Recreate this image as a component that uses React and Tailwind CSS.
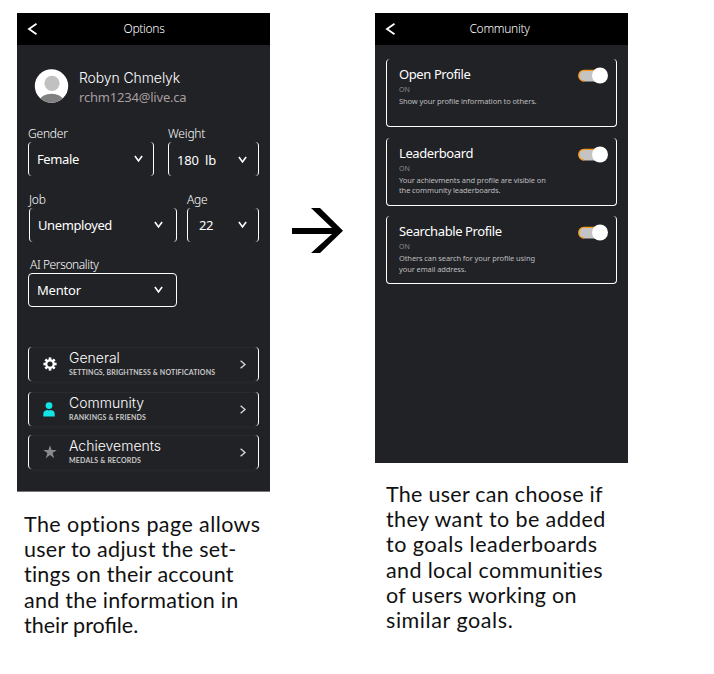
import React from "react";

const lato = "font-['Lato',sans-serif]";
const noto = "font-['Noto_Sans',sans-serif]";

function Chevron({ className, d, w, h, stroke = "#fff", sw = 1.6 }) {
  return (
    <svg className={className} width={w} height={h} viewBox={`0 0 ${w} ${h}`} fill="none">
      <path d={d} stroke={stroke} strokeWidth={sw} />
    </svg>
  );
}

function Header({ title, className }) {
  return (
    <header className="grid h-8 grid-cols-[32px_1fr_31px] items-center bg-black text-white">
      <Chevron className="ml-[10px]" w={11} h={12} d="M9.5 .8 2 6l7.5 5.2" sw={1.8} />
      <h1 className={`text-center text-[12px] leading-4 font-light ${noto} ${className}`}>{title}</h1>
    </header>
  );
}

function Field({ label, value, className, boxClass, labelClass = "tracking-[-0.2px]", valueClass = "tracking-[-0.4px]", arrowClass = "mr-[10px]" }) {
  return (
    <div className={`flex flex-col text-white ${className}`}>
      <span className={`h-4 text-[12px] leading-4 font-light ${noto} ${labelClass}`}>{label}</span>
      <div className={`flex h-[34px] items-center justify-between rounded-[4px] border-white ${boxClass}`}>
        <span className={`text-[13px] leading-4 whitespace-pre ${noto} ${valueClass}`}>{value}</span>
        <Chevron className={arrowClass} w={9} h={8} d="M.9 1 4.5 6 8.1 1" />
      </div>
    </div>
  );
}

function MenuRow({ icon, title, sub, subClass, className = "" }) {
  return (
    <div className={`flex h-[34px] items-center rounded-[4px] border-x border-white pr-[12px] shadow-[inset_0_1px_0_#292a2d,0_3px_3px_#26272a] ${className}`}>
      <div className="flex w-[40px] justify-center pl-[2px]">{icon}</div>
      <div className="flex flex-1 flex-col pt-px text-white">
        <span className="text-[14px] leading-[15px] font-['Inter',sans-serif] font-light">{title}</span>
        <span className={`text-[7px] leading-[14px] font-bold text-[#c8c8c8] ${lato} ${subClass}`}>{sub}</span>
      </div>
      <Chevron w={6} h={9} d="M.6 .8 5 4.5 .6 8.2" stroke="#d8d8d8" sw={1.4} />
    </div>
  );
}

function Card({ title, lines }) {
  return (
    <section className="flex h-[68px] justify-between rounded-[4px] border-x border-b border-white pt-[7px] pr-[8px] pl-[12px]">
      <div className="flex flex-col whitespace-nowrap">
        <h2 className={`text-[13px] leading-[17px] tracking-[-0.4px] text-white ${noto}`}>{title}</h2>
        <span className={`text-[7px] leading-[13px] text-[#8b8b8d] ${noto}`}>ON</span>
        {lines.map((l) => (
          <span key={l} className={`text-[7.5px] leading-[10.5px] tracking-[-0.1px] text-[#bdbdbf] ${noto}`}>{l}</span>
        ))}
      </div>
      <svg width="30" height="17" viewBox="0 0 30 17" className="mt-px">
        <rect x=".5" y="3" width="24" height="11.5" rx="5.7" fill="#c4c4c4" />
        <path d="M18 3.4H6.2C-.9 3.4-.9 14 6.2 14" fill="none" stroke="#f79a1b" strokeWidth="1.3" />
        <circle cx="22" cy="8.5" r="8" fill="#fff" />
      </svg>
    </section>
  );
}

function Caption({ lines, className }) {
  return (
    <p className={`text-[21.5px] leading-[25.2px] whitespace-nowrap text-[#111] ${lato} ${className}`}>
      {lines.map(([text, spacing]) => (
        <span key={text} className={`block ${spacing}`}>{text}</span>
      ))}
    </p>
  );
}

const gear = (
  <svg width="14" height="14" viewBox="-7 -7 14 14">
    {[0, 45, 90, 135].map((a) => (
      <rect key={a} x="-1.3" y="-6.6" width="2.6" height="13.2" fill="#fff" transform={`rotate(${a})`} />
    ))}
    <circle r="4.8" fill="#fff" />
    <circle r="2.6" fill="#212226" />
  </svg>
);
const person = (
  <svg className="-translate-x-px" width="12" height="15" viewBox="0 0 12 15" fill="#12e5e8">
    <circle cx="6" cy="3.6" r="3.4" />
    <path d="M.3 14.5V12Q.3 8.4 4.2 8Q6 8.8 7.8 8Q11.7 8.4 11.7 12V14.5Z" />
  </svg>
);
const star = (
  <svg width="14" height="14" viewBox="0 0 14 14" fill="#8a8a8c">
    <path d="M7 .2 8.6 5H13.8L9.6 8.1 11.2 13.3 7 10.1 2.8 13.3 4.4 8.1.2 5H5.4Z" />
  </svg>
);

export default function App() {
  return (
    <main className="flex h-[674px] w-[714px] items-start overflow-hidden bg-white pt-[13px] pl-[17px]">
      <div className="w-[253px]">
        <div className="flex h-[479px] flex-col border-b border-[#77777a] bg-[#212226]">
          <Header title="Options" className="tracking-[-0.3px]" />
          <div className="mt-[23px] ml-[17px] flex h-[36px] gap-[10px]">
            <svg width="35" height="36" viewBox="0 0 35 36">
              <defs>
                <clipPath id="face"><circle cx="17.5" cy="18" r="16.7" /></clipPath>
              </defs>
              <circle cx="17.5" cy="18" r="16.7" fill="#fff" />
              <circle cx="18" cy="15.3" r="7.6" fill="#c1c1c1" />
              <ellipse cx="17.5" cy="31.5" rx="11" ry="5.7" fill="#808080" clipPath="url(#face)" />
            </svg>
            <div className="flex flex-col whitespace-nowrap">
              <span className="text-[14px] leading-[19px] font-['Inter',sans-serif] font-light tracking-[-0.1px] text-white">Robyn Chmelyk</span>
              <span className={`text-[13px] leading-[20px] tracking-[-0.2px] text-[#a89da0] ${noto}`}>rchm1234@live.ca</span>
            </div>
          </div>
          <div className="mt-[22px] mr-[11px] ml-[11px] flex justify-between">
            <Field label="Gender" value="Female" className="w-[126px]" boxClass="border-x pl-[8px]" />
            <Field label="Weight" value="180  lb" className="w-[91px]" boxClass="border-x pl-[8px]" valueClass="tracking-[-0.2px] pt-[2px]" arrowClass="mr-[11px] mt-[2px]" />
          </div>
          <div className="mt-[16px] mr-[11px] ml-[12px] flex justify-between">
            <Field label="Job" value="Unemployed" className="w-[148px]" boxClass="border-x pl-[8px]" arrowClass="mr-[13px]" />
            <Field label="Age" value="22" className="w-[72px]" boxClass="border-x pl-[11px]" arrowClass="mr-[11px]" />
          </div>
          <div className="mt-[15px] ml-[11px]">
            <Field label="AI Personality" labelClass="pl-[2px] tracking-[-0.4px]" value="Mentor" valueClass="tracking-[-0.2px]" className="w-[149px]" boxClass="border pl-[8px]" arrowClass="mr-[13px]" />
          </div>
          <div className="mx-[11px] mt-[40px] flex flex-col">
            <MenuRow icon={gear} title="General" sub="SETTINGS, BRIGHTNESS & NOTIFICATIONS" subClass="tracking-[0.15px]" />
            <MenuRow icon={person} title="Community" sub="RANKINGS & FRIENDS" subClass="tracking-[0.2px]" className="mt-[11px]" />
            <MenuRow icon={star} title="Achievements" sub="MEDALS & RECORDS" subClass="tracking-[0.2px]" className="mt-[9px]" />
          </div>
        </div>
        <Caption
          className="mt-[20px] ml-[7px]"
          lines={[
            ["The options page allows", "tracking-[0.42px]"],
            ["user to adjust the set-", "tracking-[0.28px]"],
            ["tings on their account", "tracking-[0.25px]"],
            ["and the information in", "tracking-[0.25px]"],
            ["their profile.", "tracking-[0px]"],
          ]}
        />
      </div>

      <svg className="mt-[194px] ml-[22px]" width="51" height="48" viewBox="0 0 51 48">
        <path d="M0 21H40L19 1H28L51 23.7 28 46H19L40 27H0Z" />
      </svg>

      <div className="ml-[32px] w-[253px]">
        <div className="flex h-[450px] flex-col bg-[#212226]">
          <Header title="Community" className="pr-[5px] tracking-[-0.3px]" />
          <div className="mx-[11px] mt-[14px] flex flex-col gap-[10.7px]">
            <Card title="Open Profile" lines={["Show your profile information to others."]} />
            <Card title="Leaderboard" lines={["Your achievments and profile are visible on", "the community leaderboards."]} />
            <Card title="Searchable Profile" lines={["Others can search for your profile using", "your email address."]} />
          </div>
        </div>
        <Caption
          className="mt-[19px] ml-[11px]"
          lines={[
            ["The user can choose if", "tracking-[0.27px]"],
            ["they want to be added", "tracking-[0.4px]"],
            ["to goals leaderboards", "tracking-[0.5px]"],
            ["and local communities", "tracking-[0.36px]"],
            ["of users working on", "tracking-[0.3px]"],
            ["similar goals.", "tracking-[0.57px]"],
          ]}
        />
      </div>
    </main>
  );
}
